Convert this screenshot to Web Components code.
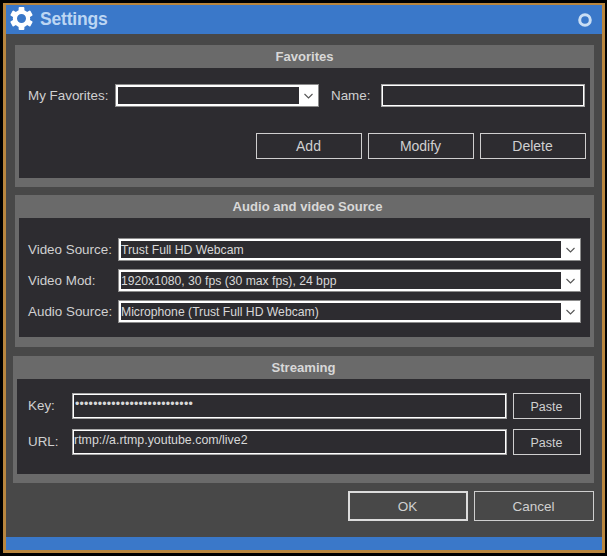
<!DOCTYPE html>
<html>
<head>
<meta charset="utf-8">
<title>Settings</title>
<style>
  html, body { margin: 0; height: 100%; background: #000; }
  body { font-family: "Liberation Sans", Arial, sans-serif; }
</style>
</head>
<body>

<settings-window heading="Settings">

  <settings-group heading="Favorites" style="--group-left: 9px; --group-bottom: 9px;">
    <form-row style="--row-gap: 0; --row-pad: 16px 5px 0 9px;">
      <field-label style="width: 87px;">My Favorites:</field-label>
      <combo-box style="width: 204px;"></combo-box>
      <field-label style="width: 50px; margin-left: 12px;">Name:</field-label>
      <text-field style="width: 204px; height: 23px;"></text-field>
    </form-row>
    <form-row style="--row-gap: 6px; --row-pad: 26px 4px 19px 0; justify-content: flex-end;">
      <push-button style="width: 106px; height: 26px;">Add</push-button>
      <push-button style="width: 106px; height: 26px;">Modify</push-button>
      <push-button style="width: 106px; height: 26px;">Delete</push-button>
    </form-row>
  </settings-group>

  <settings-group heading="Audio and video Source" style="--group-left: 9px; --group-bottom: 10px; --heading-shift: 6px; margin-top: 8px;">
    <form-row style="--row-pad: 20px 9px 0 9px;">
      <field-label style="width: 90px;">Video Source:</field-label>
      <combo-box style="flex: 1;">Trust Full HD Webcam</combo-box>
    </form-row>
    <form-row style="--row-pad: 8px 9px 0 9px;">
      <field-label style="width: 90px;">Video Mod:</field-label>
      <combo-box style="flex: 1;">1920x1080, 30 fps (30 max fps), 24 bpp</combo-box>
    </form-row>
    <form-row style="--row-pad: 8px 9px 14px 9px;">
      <field-label style="width: 90px;">Audio Source:</field-label>
      <combo-box style="flex: 1;">Microphone (Trust Full HD Webcam)</combo-box>
    </form-row>
  </settings-group>

  <settings-group heading="Streaming" style="--group-left: 7px; --group-bottom: 9px; margin-top: 9px;">
    <form-row style="--row-pad: 14px 9px 0 11px; --row-gap: 6px;">
      <field-label style="width: 38px; margin-top: -2px;">Key:</field-label>
      <text-field style="flex: 1; height: 26px; --field-left: 2px; --field-spacing: .2px;">••••••••••••••••••••••••••</text-field>
      <push-button small style="width: 68px; height: 26px;">Paste</push-button>
    </form-row>
    <form-row style="--row-pad: 10px 9px 19px 11px; --row-gap: 6px;">
      <field-label style="width: 38px; margin-top: -2px;">URL:</field-label>
      <text-field style="flex: 1; height: 26px;">rtmp://a.rtmp.youtube.com/live2</text-field>
      <push-button small style="width: 68px; height: 26px;">Paste</push-button>
    </form-row>
  </settings-group>

  <form-row style="--row-gap: 6px; --row-pad: 8px 8px 0 0; justify-content: flex-end;">
    <push-button thick style="width: 120px; height: 30px; font-size: 13.5px;">OK</push-button>
    <push-button style="width: 120px; height: 30px; font-size: 13.5px;">Cancel</push-button>
  </form-row>

</settings-window>

<script>
class SettingsWindow extends HTMLElement {
  constructor() {
    super();
    const root = this.attachShadow({ mode: 'open' });
    root.innerHTML = `
<style>
  :host {
    display: flex;
    flex-direction: column;
    box-sizing: border-box;
    width: 602px;
    height: 550px;
    margin: 3px 2px 3px 3px;
    border: 3px solid #b8863f;
    border-top-width: 2px;
    background: #484848;
  }
  header {
    display: flex;
    align-items: center;
    height: 29px;
    flex: none;
    padding: 0 10px 0 4px;
    background: #3a78c9;
    color: #bcd6f3;
    font-size: 17.5px;
    font-weight: bold;
  }
  .gear { width: 23px; height: 23px; margin: 0 7px 2px 0; }
  .title { flex: 1; letter-spacing: -0.2px; margin-bottom: 1px; }
  .dot { width: 14px; height: 14px; }
  main { flex: 1; display: flex; flex-direction: column; padding-top: 11px; }
  footer { flex: none; height: 13px; background: #3a78c9; }
</style>
<header>
  <svg class="gear" viewBox="-12 -12 24 24">
    <circle r="6.9" fill="none" stroke="#fff" stroke-width="4.4"/>
    <g fill="#fff">
      <rect x="-3" y="-12" width="6" height="6" rx="1"/>
      <rect x="-3" y="-12" width="6" height="6" rx="1" transform="rotate(60)"/>
      <rect x="-3" y="-12" width="6" height="6" rx="1" transform="rotate(120)"/>
      <rect x="-3" y="-12" width="6" height="6" rx="1" transform="rotate(180)"/>
      <rect x="-3" y="-12" width="6" height="6" rx="1" transform="rotate(240)"/>
      <rect x="-3" y="-12" width="6" height="6" rx="1" transform="rotate(300)"/>
    </g>
  </svg>
  <span class="title"></span>
  <svg class="dot" viewBox="0 0 14 14"><circle cx="7" cy="7" r="5.3" fill="none" stroke="#c9def4" stroke-width="3"/></svg>
</header>
<main><slot></slot></main>
<footer></footer>`;
    root.querySelector('.title').textContent = this.getAttribute('heading');
  }
}

class SettingsGroup extends HTMLElement {
  constructor() {
    super();
    const root = this.attachShadow({ mode: 'open' });
    root.innerHTML = `
<style>
  :host {
    display: block;
    margin-left: var(--group-left, 9px);
    margin-right: 8px;
    padding: 0 4px var(--group-bottom, 9px);
    background: #6a6a6a;
  }
  h2 {
    margin: 0 -4px;
    padding-left: var(--heading-shift, 0);
    height: 23px;
    line-height: 23px;
    text-align: center;
    font-size: 13.1px;
    font-weight: bold;
    color: #d8d8d8;
  }
  .inner { background: #2d2c30; }
</style>
<h2></h2>
<div class="inner"><slot></slot></div>`;
    root.querySelector('h2').textContent = this.getAttribute('heading');
  }
}

class FormRow extends HTMLElement {
  constructor() {
    super();
    this.attachShadow({ mode: 'open' }).innerHTML = `
<style>
  :host {
    display: flex;
    align-items: center;
    gap: var(--row-gap, 0);
    padding: var(--row-pad, 0);
  }
</style>
<slot></slot>`;
  }
}

class FieldLabel extends HTMLElement {
  constructor() {
    super();
    this.attachShadow({ mode: 'open' }).innerHTML = `
<style>
  :host {
    display: block;
    flex: none;
    font-size: 13.4px;
    color: #d0d0d0;
    white-space: nowrap;
  }
</style>
<slot></slot>`;
  }
}

class ComboBox extends HTMLElement {
  constructor() {
    super();
    this.attachShadow({ mode: 'open' }).innerHTML = `
<style>
  :host {
    display: flex;
    box-sizing: border-box;
    height: 23px;
    border: 1px solid #8c8c8c;
    background: #fff;
    font-size: 12.2px;
    color: #d8d8d8;
  }
  .value {
    flex: 1;
    min-width: 0;
    margin: 2px 0 2px 2px;
    line-height: 19px;
    background: #2d2c30;
    white-space: nowrap;
    overflow: hidden;
  }
  .arrow {
    flex: none;
    width: 19px;
    display: flex;
    align-items: center;
    justify-content: center;
  }
  svg { width: 9px; height: 6px; }
</style>
<div class="value"><slot></slot></div>
<div class="arrow"><svg viewBox="0 0 9 6"><path d="M.5 1 4.5 5 8.5 1" fill="none" stroke="#555" stroke-width="1.1"/></svg></div>`;
  }
}

class TextField extends HTMLElement {
  constructor() {
    super();
    this.attachShadow({ mode: 'open' }).innerHTML = `
<style>
  :host {
    display: block;
    box-sizing: border-box;
    border: 1px solid #a8a8a8;
    box-shadow: inset 0 0 0 1px #fff;
    padding: 3px 0 0 var(--field-left, 1px);
    font-size: 12.4px;
    line-height: 15px;
    letter-spacing: var(--field-spacing, 0);
    color: #d8d8d8;
    white-space: nowrap;
    overflow: hidden;
  }
</style>
<slot></slot>`;
  }
}

class PushButton extends HTMLElement {
  constructor() {
    super();
    this.attachShadow({ mode: 'open' }).innerHTML = `
<style>
  :host {
    display: flex;
    align-items: center;
    justify-content: center;
    flex: none;
    box-sizing: border-box;
    border: 1px solid #cfcfcf;
    padding-right: 1px;
    font-size: 14px;
    color: #d0d0d0;
    cursor: pointer;
  }
  :host([small]) { font-size: 12.5px; padding-top: 2px; }
  :host([thick]) { border: 2px solid #dcdcdc; }
</style>
<slot></slot>`;
  }
}

customElements.define('settings-window', SettingsWindow);
customElements.define('settings-group', SettingsGroup);
customElements.define('form-row', FormRow);
customElements.define('field-label', FieldLabel);
customElements.define('combo-box', ComboBox);
customElements.define('text-field', TextField);
customElements.define('push-button', PushButton);
</script>
</body>
</html>
